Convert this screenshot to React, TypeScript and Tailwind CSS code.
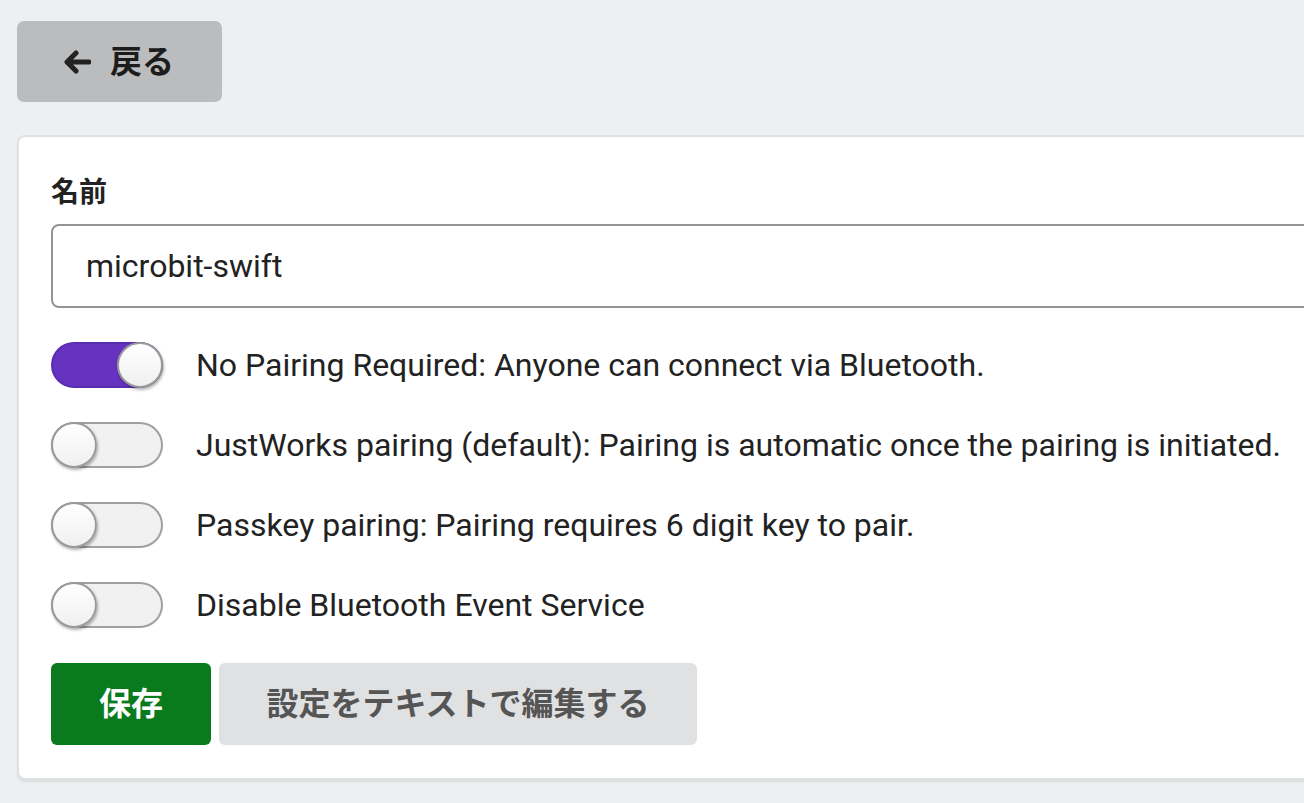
import React from "react";

const font = { fontFamily: 'Roboto, "Noto Sans CJK JP", sans-serif' };

const Toggle: React.FC<{ on?: boolean }> = ({ on }) => (
  <div
    className={
      "relative h-[46px] w-[112px] shrink-0 rounded-full border-2 " +
      (on ? "border-[#5a2cb0] bg-[#6633c0]" : "border-[#a0a0a0] bg-[#f1f1f1]")
    }
  >
    <div
      className={
        "absolute top-[-2px] h-[46px] w-[46px] rounded-full border-2 border-[#9a9a9a] bg-gradient-to-b from-white to-[#f0f0f0] shadow-[1px_2px_3px_rgba(0,0,0,0.3)] " +
        (on ? "right-[-2px]" : "left-[-2px]")
      }
    />
  </div>
);

const rows: { label: string; on?: boolean }[] = [
  { label: "No Pairing Required: Anyone can connect via Bluetooth.", on: true },
  { label: "JustWorks pairing (default): Pairing is automatic once the pairing is initiated." },
  { label: "Passkey pairing: Pairing requires 6 digit key to pair." },
  { label: "Disable Bluetooth Event Service" },
];

export default function App() {
  return (
    <div className="h-[803px] w-[1304px] overflow-hidden bg-[#ecf0f1] text-[#222]" style={font}>
      <div className="pl-[17px] pt-[21px]">
        <button className="flex h-[81px] w-[205px] items-center gap-[19px] rounded-[7px] bg-[#bbbcbd] pl-[46px] text-[32px] font-bold text-[#1c1c1c]">
          <svg width="28" height="26" viewBox="0 0 28 26" fill="none">
            <path d="M26 13H6M13 4L4 13l9 9" stroke="#222" strokeWidth="5" strokeLinecap="round" strokeLinejoin="round" />
          </svg>
          <span className="leading-none">戻る</span>
        </button>
      </div>
      <div className="ml-[17px] mt-[33px] w-[1400px] rounded-[8px] border-2 border-[#dfe1e2] bg-white px-[32px] pt-[36px] pb-[33px] shadow-[0_2px_2px_rgba(0,0,0,0.08)]">
        <div className="text-[28px] font-bold leading-[40px] text-[#222]">名前</div>
        <div className="mt-[11px] flex h-[84px] w-[1400px] items-center rounded-[8px] border-2 border-[#949497] pl-[33px] text-[32px] text-[#222]">
          microbit-swift
        </div>
        <div className="mt-[34px] flex flex-col gap-[34px]">
          {rows.map((r) => (
            <div key={r.label} className="flex items-center gap-[33px]">
              <Toggle on={r.on} />
              <span className="text-[32px] leading-[46px] text-[#222]">{r.label}</span>
            </div>
          ))}
        </div>
        <div className="mt-[35px] flex gap-[8px]">
          <button className="h-[82px] w-[160px] rounded-[6px] bg-[#0a7a1f] text-[32px] font-bold text-white">保存</button>
          <button className="h-[82px] w-[478px] rounded-[6px] bg-[#e0e1e3] text-[32px] font-bold text-[#555]">
            設定をテキストで編集する
          </button>
        </div>
      </div>
    </div>
  );
}
